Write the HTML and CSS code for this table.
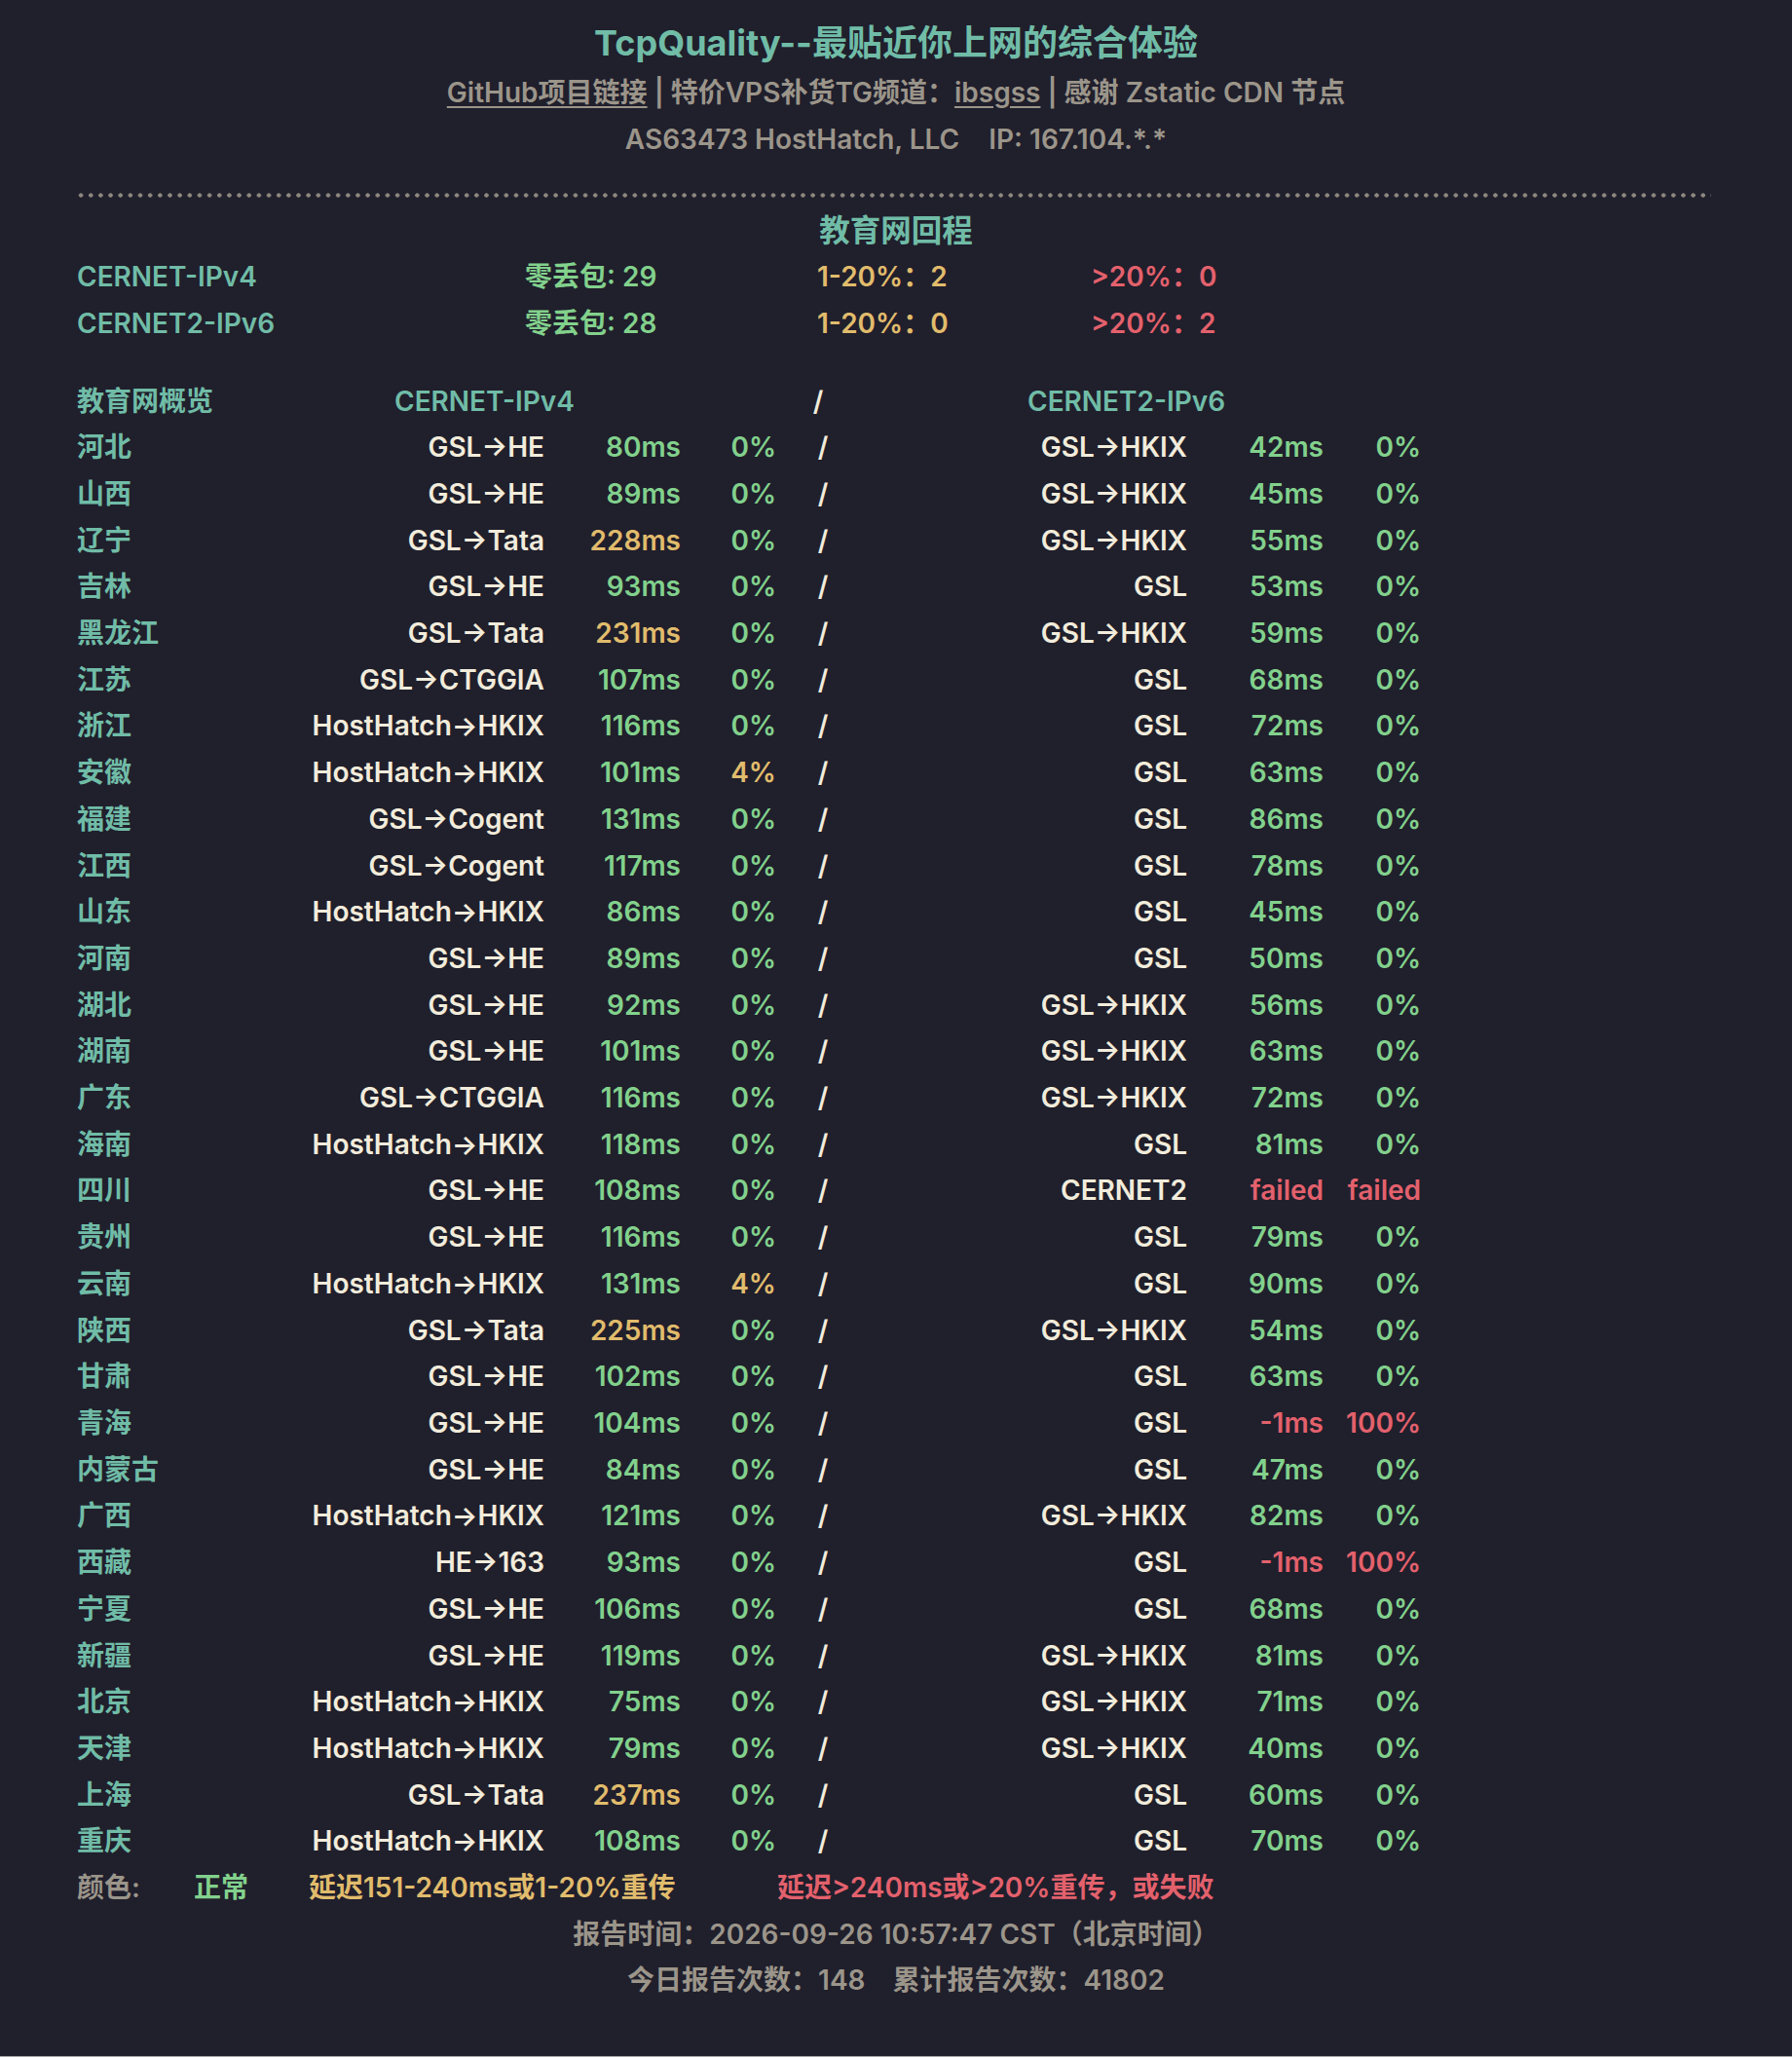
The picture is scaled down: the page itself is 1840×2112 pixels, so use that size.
FILE: index.html
```html
<!DOCTYPE html>
<html lang="zh-CN">
<head>
<meta charset="utf-8">
<title>TcpQuality</title>
<link rel="stylesheet" href="styles.css">
</head>
<body>
<div class="wrap">
  <header class="head">
    <h1 class="title">TcpQuality--最贴近你上网的综合体验</h1>
    <p class="line m"><a class="lnk" href="#">GitHub项目链接</a> | 特价VPS补货TG频道：<a class="lnk" href="#">ibsgss</a> | 感谢 Zstatic CDN 节点</p>
    <p class="line m">AS63473 HostHatch, LLC<span class="gap">IP: 167.104.*.*</span></p>
  </header>
  <div class="dots"></div>
  <h2 class="sec t">教育网回程</h2>
  <div class="sum">
    <span class="t">CERNET-IPv4</span><span class="g">零丢包: 29</span><span class="y">1-20%：2</span><span class="r">&gt;20%：0</span>
    <span class="t">CERNET2-IPv6</span><span class="g">零丢包: 28</span><span class="y">1-20%：0</span><span class="r">&gt;20%：2</span>
  </div>
  <div class="ov">
    <span class="t">教育网概览</span><span class="t h4">CERNET-IPv4</span><span class="c hs">/</span><span class="t h6">CERNET2-IPv6</span>

    <span class="t">河北</span><span class="c rt">GSL→HE</span><span class="g rt">80ms</span><span class="g rt">0%</span><span class="c sl">/</span><span class="c rt">GSL→HKIX</span><span class="g rt">42ms</span><span class="g rt">0%</span>
    <span class="t">山西</span><span class="c rt">GSL→HE</span><span class="g rt">89ms</span><span class="g rt">0%</span><span class="c sl">/</span><span class="c rt">GSL→HKIX</span><span class="g rt">45ms</span><span class="g rt">0%</span>
    <span class="t">辽宁</span><span class="c rt">GSL→Tata</span><span class="y rt">228ms</span><span class="g rt">0%</span><span class="c sl">/</span><span class="c rt">GSL→HKIX</span><span class="g rt">55ms</span><span class="g rt">0%</span>
    <span class="t">吉林</span><span class="c rt">GSL→HE</span><span class="g rt">93ms</span><span class="g rt">0%</span><span class="c sl">/</span><span class="c rt">GSL</span><span class="g rt">53ms</span><span class="g rt">0%</span>
    <span class="t">黑龙江</span><span class="c rt">GSL→Tata</span><span class="y rt">231ms</span><span class="g rt">0%</span><span class="c sl">/</span><span class="c rt">GSL→HKIX</span><span class="g rt">59ms</span><span class="g rt">0%</span>
    <span class="t">江苏</span><span class="c rt">GSL→CTGGIA</span><span class="g rt">107ms</span><span class="g rt">0%</span><span class="c sl">/</span><span class="c rt">GSL</span><span class="g rt">68ms</span><span class="g rt">0%</span>
    <span class="t">浙江</span><span class="c rt">HostHatch→HKIX</span><span class="g rt">116ms</span><span class="g rt">0%</span><span class="c sl">/</span><span class="c rt">GSL</span><span class="g rt">72ms</span><span class="g rt">0%</span>
    <span class="t">安徽</span><span class="c rt">HostHatch→HKIX</span><span class="g rt">101ms</span><span class="y rt">4%</span><span class="c sl">/</span><span class="c rt">GSL</span><span class="g rt">63ms</span><span class="g rt">0%</span>
    <span class="t">福建</span><span class="c rt">GSL→Cogent</span><span class="g rt">131ms</span><span class="g rt">0%</span><span class="c sl">/</span><span class="c rt">GSL</span><span class="g rt">86ms</span><span class="g rt">0%</span>
    <span class="t">江西</span><span class="c rt">GSL→Cogent</span><span class="g rt">117ms</span><span class="g rt">0%</span><span class="c sl">/</span><span class="c rt">GSL</span><span class="g rt">78ms</span><span class="g rt">0%</span>
    <span class="t">山东</span><span class="c rt">HostHatch→HKIX</span><span class="g rt">86ms</span><span class="g rt">0%</span><span class="c sl">/</span><span class="c rt">GSL</span><span class="g rt">45ms</span><span class="g rt">0%</span>
    <span class="t">河南</span><span class="c rt">GSL→HE</span><span class="g rt">89ms</span><span class="g rt">0%</span><span class="c sl">/</span><span class="c rt">GSL</span><span class="g rt">50ms</span><span class="g rt">0%</span>
    <span class="t">湖北</span><span class="c rt">GSL→HE</span><span class="g rt">92ms</span><span class="g rt">0%</span><span class="c sl">/</span><span class="c rt">GSL→HKIX</span><span class="g rt">56ms</span><span class="g rt">0%</span>
    <span class="t">湖南</span><span class="c rt">GSL→HE</span><span class="g rt">101ms</span><span class="g rt">0%</span><span class="c sl">/</span><span class="c rt">GSL→HKIX</span><span class="g rt">63ms</span><span class="g rt">0%</span>
    <span class="t">广东</span><span class="c rt">GSL→CTGGIA</span><span class="g rt">116ms</span><span class="g rt">0%</span><span class="c sl">/</span><span class="c rt">GSL→HKIX</span><span class="g rt">72ms</span><span class="g rt">0%</span>
    <span class="t">海南</span><span class="c rt">HostHatch→HKIX</span><span class="g rt">118ms</span><span class="g rt">0%</span><span class="c sl">/</span><span class="c rt">GSL</span><span class="g rt">81ms</span><span class="g rt">0%</span>
    <span class="t">四川</span><span class="c rt">GSL→HE</span><span class="g rt">108ms</span><span class="g rt">0%</span><span class="c sl">/</span><span class="c rt">CERNET2</span><span class="r rt">failed</span><span class="r rt">failed</span>
    <span class="t">贵州</span><span class="c rt">GSL→HE</span><span class="g rt">116ms</span><span class="g rt">0%</span><span class="c sl">/</span><span class="c rt">GSL</span><span class="g rt">79ms</span><span class="g rt">0%</span>
    <span class="t">云南</span><span class="c rt">HostHatch→HKIX</span><span class="g rt">131ms</span><span class="y rt">4%</span><span class="c sl">/</span><span class="c rt">GSL</span><span class="g rt">90ms</span><span class="g rt">0%</span>
    <span class="t">陕西</span><span class="c rt">GSL→Tata</span><span class="y rt">225ms</span><span class="g rt">0%</span><span class="c sl">/</span><span class="c rt">GSL→HKIX</span><span class="g rt">54ms</span><span class="g rt">0%</span>
    <span class="t">甘肃</span><span class="c rt">GSL→HE</span><span class="g rt">102ms</span><span class="g rt">0%</span><span class="c sl">/</span><span class="c rt">GSL</span><span class="g rt">63ms</span><span class="g rt">0%</span>
    <span class="t">青海</span><span class="c rt">GSL→HE</span><span class="g rt">104ms</span><span class="g rt">0%</span><span class="c sl">/</span><span class="c rt">GSL</span><span class="r rt">-1ms</span><span class="r rt">100%</span>
    <span class="t">内蒙古</span><span class="c rt">GSL→HE</span><span class="g rt">84ms</span><span class="g rt">0%</span><span class="c sl">/</span><span class="c rt">GSL</span><span class="g rt">47ms</span><span class="g rt">0%</span>
    <span class="t">广西</span><span class="c rt">HostHatch→HKIX</span><span class="g rt">121ms</span><span class="g rt">0%</span><span class="c sl">/</span><span class="c rt">GSL→HKIX</span><span class="g rt">82ms</span><span class="g rt">0%</span>
    <span class="t">西藏</span><span class="c rt">HE→163</span><span class="g rt">93ms</span><span class="g rt">0%</span><span class="c sl">/</span><span class="c rt">GSL</span><span class="r rt">-1ms</span><span class="r rt">100%</span>
    <span class="t">宁夏</span><span class="c rt">GSL→HE</span><span class="g rt">106ms</span><span class="g rt">0%</span><span class="c sl">/</span><span class="c rt">GSL</span><span class="g rt">68ms</span><span class="g rt">0%</span>
    <span class="t">新疆</span><span class="c rt">GSL→HE</span><span class="g rt">119ms</span><span class="g rt">0%</span><span class="c sl">/</span><span class="c rt">GSL→HKIX</span><span class="g rt">81ms</span><span class="g rt">0%</span>
    <span class="t">北京</span><span class="c rt">HostHatch→HKIX</span><span class="g rt">75ms</span><span class="g rt">0%</span><span class="c sl">/</span><span class="c rt">GSL→HKIX</span><span class="g rt">71ms</span><span class="g rt">0%</span>
    <span class="t">天津</span><span class="c rt">HostHatch→HKIX</span><span class="g rt">79ms</span><span class="g rt">0%</span><span class="c sl">/</span><span class="c rt">GSL→HKIX</span><span class="g rt">40ms</span><span class="g rt">0%</span>
    <span class="t">上海</span><span class="c rt">GSL→Tata</span><span class="y rt">237ms</span><span class="g rt">0%</span><span class="c sl">/</span><span class="c rt">GSL</span><span class="g rt">60ms</span><span class="g rt">0%</span>
    <span class="t">重庆</span><span class="c rt">HostHatch→HKIX</span><span class="g rt">108ms</span><span class="g rt">0%</span><span class="c sl">/</span><span class="c rt">GSL</span><span class="g rt">70ms</span><span class="g rt">0%</span>
  </div>
  <div class="legend">
    <span class="m">颜色:</span><span class="g">正常</span><span class="y">延迟151-240ms或1-20%重传</span><span class="r">延迟&gt;240ms或&gt;20%重传，或失败</span>
  </div>
  <footer class="foot m">
    <p class="line">报告时间：2026-09-26 10:57:47 CST（北京时间）</p>
    <p class="line">今日报告次数：148<span class="gap2">累计报告次数：41802</span></p>
  </footer>
</div>
</body>
</html>
```
FILE: styles.css
```css
html {
  background: #a7a7a9;
}
body {
  margin: 0;
  min-height: 2111px;
  background: #201f2c;
  font-family: Inter, "Noto Sans CJK SC", sans-serif;
  font-size: 28px;
  line-height: 47.7px;
  font-weight: 600;
  color: #f2ecdb;
}
.wrap {
  padding: 16px 79px 0;
}
.t { color: #70bca7; }
.g { color: #82d18c; }
.y { color: #e1bc6c; }
.r { color: #e3616c; }
.c { color: #f2ecdb; }
.m { color: #9b958a; }

.head {
  text-align: center;
}
.title {
  margin: 0;
  font-size: 36px;
  line-height: 56px;
  font-weight: 700;
  color: #70bca7;
}
.line {
  margin: 0;
}
.lnk {
  color: #9b958a;
  text-decoration: underline;
  text-underline-offset: 4px;
}
.gap {
  margin-left: 30px;
}
.dots {
  margin: 31px 4px 0 -1px;
  height: 5px;
  background-image: radial-gradient(circle, #8e897f 1.9px, transparent 2.4px);
  background-size: 10.17px 5px;
  background-repeat: repeat-x;
}
.sec {
  margin: 10px 0 0;
  font-size: 31.5px;
  line-height: 47.7px;
  text-align: center;
  font-weight: 700;
}
.sum {
  display: grid;
  grid-template-columns: 460px 300px 281px 1fr;
}
.ov {
  margin-top: 32px;
  display: grid;
  grid-template-columns: 221px 259px 140px 98px 96px 326px 140px 100px;
}
.rt {
  text-align: right;
}
.sl {
  text-align: center;
}
.h4 {
  grid-column: span 3;
  padding-left: 105px;
}
.hs {
  text-align: center;
  padding-right: 10px;
}
.h6 {
  grid-column: span 3;
  padding-left: 162px;
}
.legend {
  display: grid;
  grid-template-columns: 120px 118px 481px 1fr;
}
.foot {
  text-align: center;
}
.gap2 {
  margin-left: 28px;
}
```
